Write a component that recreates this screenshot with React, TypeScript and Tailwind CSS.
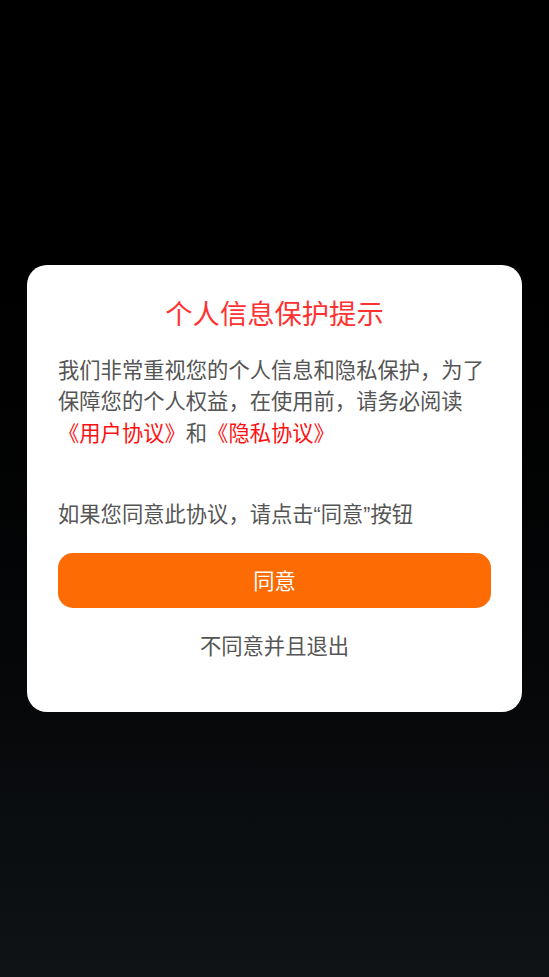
import React from "react";

export default function App() {
  return (
    <div
      className="flex h-[977px] w-full items-center justify-center bg-gradient-to-b from-[#000000] to-[#101316]"
      style={{ fontFamily: '"Noto Sans CJK SC", "Noto Sans", sans-serif' }}
    >
      <div className="flex w-[495px] flex-col rounded-[20px] bg-white px-[31px] pt-[29px] pb-[52px]">
        <h1 className="text-center text-[27.3px] leading-[36px] font-normal text-[#ff3232]">
          个人信息保护提示
        </h1>
        <p className="mt-[23px] text-[21.3px] leading-[31.5px] text-[#555555]">
          我们非常重视您的个人信息和隐私保护，为了保障您的个人权益，在使用前，请务必阅读
          <br />
          <span className="text-[#ff1010]">《用户协议》</span>和
          <span className="text-[#ff1010]">《隐私协议》</span>
        </p>
        <p className="mt-[50px] text-[21.3px] leading-[31.5px] text-[#555555]">
          如果您同意此协议，请点击
          <span className="font-['Liberation_Sans']">“</span>同意
          <span className="font-['Liberation_Sans']">”</span>按钮
        </p>
        <button className="mt-[21px] flex h-[55px] w-full items-center justify-center rounded-[15px] bg-[#fc6b04] text-[21.3px] text-white">
          同意
        </button>
        <button className="mt-[21px] text-center text-[21.3px] leading-[31.5px] text-[#555555]">
          不同意并且退出
        </button>
      </div>
    </div>
  );
}
